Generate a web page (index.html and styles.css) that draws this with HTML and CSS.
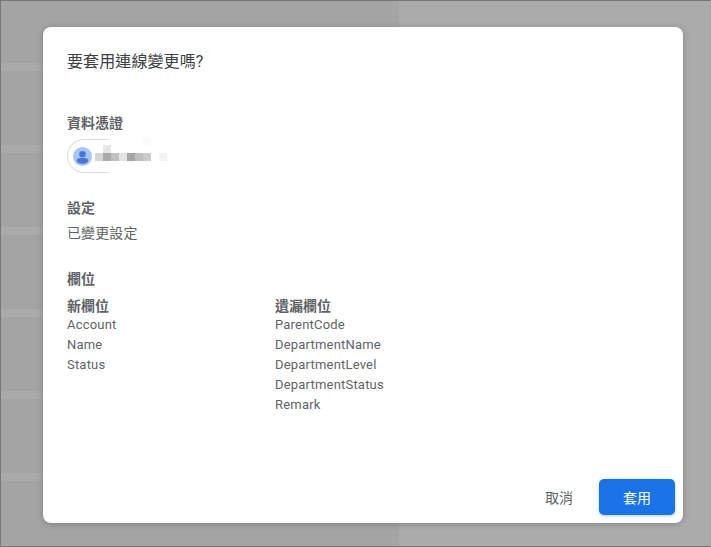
FILE: index.html
```html
<!DOCTYPE html>
<html lang="zh-Hant">
<head>
<meta charset="utf-8">
<title>要套用連線變更嗎?</title>
<link rel="stylesheet" href="styles.css">
</head>
<body>
<div class="backdrop">
  <div class="panel-left"></div>
  <main class="dialog">
    <h1 class="title">要套用連線變更嗎?</h1>
    <section class="credentials">
      <h2 class="label">資料憑證</h2>
      <div class="chip-row">
        <div class="chip">
          <svg class="avatar" viewBox="0 0 20 20" width="19" height="19" aria-hidden="true">
            <circle cx="10" cy="10" r="10" fill="#a9c4f5"/>
            <circle cx="10" cy="7.600" r="3.400" fill="#4477d8"/>
            <path d="M3.900 14.200C3.900 12.200 7 11.600 10 11.600s6.100.6 6.100 2.600c0 1.900-2.800 3.400-6.100 3.400s-6.100-1.500-6.100-3.400z" fill="#4477d8"/>
          </svg>
        </div>
        <div class="blur" aria-hidden="true">
          <i class="b1"></i><i class="b2"></i><i class="b3"></i><i class="b4"></i><i class="b5"></i><i class="b6"></i><i class="b7"></i><i class="b8"></i>
        </div>
      </div>
    </section>
    <section class="settings">
      <h2 class="label">設定</h2>
      <p class="value">已變更設定</p>
    </section>
    <section class="fields">
      <h2 class="label">欄位</h2>
      <div class="columns">
        <div class="column">
          <h3 class="col-head">新欄位</h3>
          <ul class="list">
            <li>Account</li>
            <li>Name</li>
            <li>Status</li>
          </ul>
        </div>
        <div class="column">
          <h3 class="col-head">遺漏欄位</h3>
          <ul class="list">
            <li>ParentCode</li>
            <li>DepartmentName</li>
            <li>DepartmentLevel</li>
            <li>DepartmentStatus</li>
            <li>Remark</li>
          </ul>
        </div>
      </div>
    </section>
    <footer class="actions">
      <button class="btn-cancel" type="button">取消</button>
      <button class="btn-apply" type="button">套用</button>
    </footer>
  </main>
</div>
</body>
</html>
```
FILE: styles.css
```css
* { box-sizing: border-box; }
html, body { margin: 0; padding: 0; }
body {
  width: 711px;
  height: 547px;
  overflow: hidden;
  font-family: Roboto, "Noto Sans CJK TC", sans-serif;
  color: #5f6368;
}
.backdrop {
  position: relative;
  width: 711px;
  height: 547px;
  padding: 26px 27px 23px 42px;
  border: 1px solid #777;
  border-right-color: #a6a6a6;
  background-color: #ababab;
}
.panel-left {
  position: absolute;
  left: 0;
  top: 0;
  width: 398px;
  height: 100%;
  background-color: #a4a4a4;
  background-image: repeating-linear-gradient(to bottom, transparent 0, transparent 62px, #aaa 62px, #aaa 70px, transparent 70px, transparent 82px);
}
.dialog {
  position: relative;
  display: flex;
  flex-direction: column;
  width: 640px;
  height: 496px;
  padding: 25px 8px 8px 24px;
  background: #fff;
  border-radius: 8px;
  box-shadow: 0 1px 6px rgba(60, 64, 67, 0.35);
}
.title {
  margin: 0;
  font-size: 16px;
  font-weight: 400;
  line-height: 20px;
  letter-spacing: 0.1px;
  color: #3c4043;
}
.label {
  margin: 0;
  font-size: 14px;
  font-weight: 700;
  line-height: 20px;
  color: #5f6368;
}
.credentials { margin-top: 41px; }
.chip-row {
  display: flex;
  align-items: center;
  height: 34px;
  margin-top: 6px;
}
.chip {
  display: flex;
  align-items: center;
  width: 42px;
  height: 34px;
  padding-left: 5px;
  border: 1px solid #dadce0;
  border-right: 0;
  border-radius: 17px 0 0 17px;
}
.avatar { display: block; flex: none; }
.blur {
  display: flex;
  margin-top: 2px;
  margin-left: -14px;
  height: 8px;
}
.blur i { display: block; width: 8px; height: 8px; }
.blur .b1 { background: #d5d5d5; }
.blur .b2 { background: #ababab; box-shadow: 0 -8px 0 #e6e6e6; }
.blur .b3 { background: #c0c0c0; }
.blur .b4 { background: #e4e4e4; }
.blur .b5 { background: #a6a6a6; }
.blur .b6 { background: #bfbfbf; }
.blur .b7 { background: #cccccc; box-shadow: 0 -16px 0 #fbfbfb; }
.blur .b8 { background: #f2f2f2; margin-left: 8px; }
.settings { margin-top: 25px; }
.value {
  margin: 5px 0 0;
  font-size: 14px;
  line-height: 20px;
  letter-spacing: 0.1px;
  color: #5f6368;
}
.fields { margin-top: 26px; }
.columns {
  display: flex;
  margin-top: 9px;
}
.column { width: 208px; }
.col-head {
  margin: 0;
  font-size: 14px;
  font-weight: 700;
  line-height: 17px;
  color: #5f6368;
}
.list {
  margin: 0;
  padding: 0;
  list-style: none;
  font-size: 13px;
  line-height: 20px;
  letter-spacing: 0.2px;
}
.actions {
  display: flex;
  justify-content: flex-end;
  align-items: center;
  gap: 8px;
  margin-top: auto;
}
.btn-cancel, .btn-apply {
  font-family: inherit;
  font-size: 14px;
  height: 36px;
  border: 0;
  border-radius: 5px;
  padding: 0;
  cursor: pointer;
}
.btn-cancel {
  width: 64px;
  background: transparent;
  color: #5f6368;
}
.btn-apply {
  width: 76px;
  background: #1a73e8;
  color: #fff;
  box-shadow: 0 1px 3px rgba(26, 115, 232, 0.35);
}
```
